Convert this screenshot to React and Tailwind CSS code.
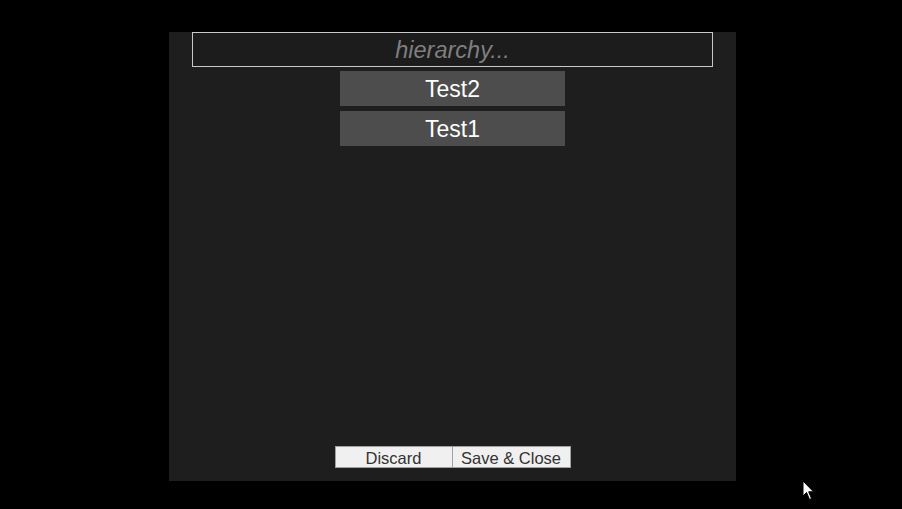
import React from 'react';

const items = ['Test2', 'Test1'];

const Cursor = () => (
  <svg className="absolute left-[802px] top-[480px]" width="14" height="21" viewBox="0 0 14 21">
    <path d="M1 1 L1 16 L4.5 12.5 L7.5 19.5 L9.5 18.5 L6.7 11.8 L11.5 11.8 Z" fill="#fff" stroke="#000" strokeWidth="1" />
  </svg>
);

export default function App() {
  return (
    <div className="relative w-[902px] h-[509px] bg-black overflow-hidden font-['Liberation_Sans',Arial,sans-serif]">
      <div className="ml-[169px] pt-[32px]">
        <div className="w-[567px] h-[449px] bg-[#1e1e1e] flex flex-col items-center px-[23px]">
          <input
            placeholder="hierarchy..."
            className="w-[521px] h-[35px] shrink-0 pt-[2px] border border-[#c8c8c8] bg-[#1c1c1c] text-center text-[23.5px] italic text-white placeholder:text-[#7f7f7f] outline-none"
          />
          <div className="flex flex-col gap-[5px] mt-[4px]">
            {items.map((name) => (
              <button key={name} className="w-[225px] h-[35px] pt-[2px] bg-[#4d4d4d] text-white text-[23px] leading-none">
                {name}
              </button>
            ))}
          </div>
          <div className="flex-1" />
          <div className="flex mb-[13px]">
            <button className="w-[118px] h-[22px] pt-[3px] bg-[#f0f0f0] border border-[#a0a0a0] text-[#333] text-[16.5px] leading-none">Discard</button>
            <button className="w-[118px] h-[22px] pt-[3px] bg-[#f0f0f0] border border-l-0 border-[#a0a0a0] text-[#333] text-[16.5px] leading-none">Save &amp; Close</button>
          </div>
        </div>
      </div>
      <Cursor />
    </div>
  );
}
